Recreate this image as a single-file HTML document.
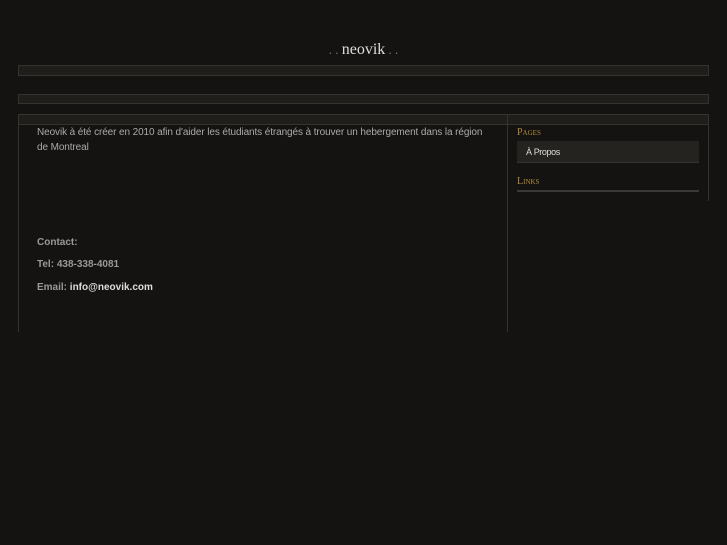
<!DOCTYPE html>
<html><head><meta charset="utf-8"><style>
body{margin:0;background:#141311;width:727px;height:545px;overflow:hidden;font-family:"Liberation Sans",sans-serif;position:relative}
.a{position:absolute}
.bar{background:#1f1e1b;border:1px solid #34332f;box-sizing:border-box}
</style></head><body>
<div class="a" style="left:0;width:727px;top:41px;text-align:center;font-family:'Liberation Serif',serif;font-size:16px;color:#ddd"><span style="color:#777;font-size:13px">. . </span>neovik<span style="color:#777;font-size:13px"> . .</span></div>
<div class="a bar" style="left:18px;top:65px;width:691px;height:11px"></div>
<div class="a bar" style="left:18px;top:94px;width:691px;height:10px"></div>
<div class="a bar" style="left:18px;top:114px;width:691px;height:11px"></div>
<div class="a" style="left:18px;top:125px;width:1px;height:207px;background:#34332f"></div>
<div class="a" style="left:507px;top:114px;width:1px;height:218px;background:#34332f"></div>
<div class="a" style="left:708px;top:114px;width:1px;height:87px;background:#34332f"></div>
<div class="a" style="left:37px;top:125px;width:456px;font-size:10px;line-height:15px;color:#aaa;letter-spacing:-0.1px">Neovik à été créer en 2010 afin d'aider les étudiants étrangés à trouver un hebergement dans la région de Montreal</div>
<div class="a" style="left:37px;top:237px;font-size:10px;font-weight:bold;color:#999">Contact:</div>
<div class="a" style="left:37px;top:259px;font-size:10px;font-weight:bold;color:#999">Tel: 438-338-4081</div>
<div class="a" style="left:37px;top:282px;font-size:10px;font-weight:bold;color:#999">Email: <span style="color:#ddd">info@neovik.com</span></div>
<div class="a" style="left:517px;top:127px;font-family:'Liberation Serif',serif;font-size:10px;color:#b08a3a;font-variant:small-caps">Pages</div>
<div class="a" style="left:517px;top:141px;width:182px;height:21px;background:#242320;border-bottom:1px solid #333"></div>
<div class="a" style="left:526px;top:147px;font-size:9px;color:#ddd;letter-spacing:-0.4px">À Propos</div>
<div class="a" style="left:517px;top:176px;font-family:'Liberation Serif',serif;font-size:10px;color:#b08a3a;font-variant:small-caps">Links</div>
<div class="a" style="left:517px;top:190px;width:182px;height:2px;background:#3a3935"></div>
</body></html>
